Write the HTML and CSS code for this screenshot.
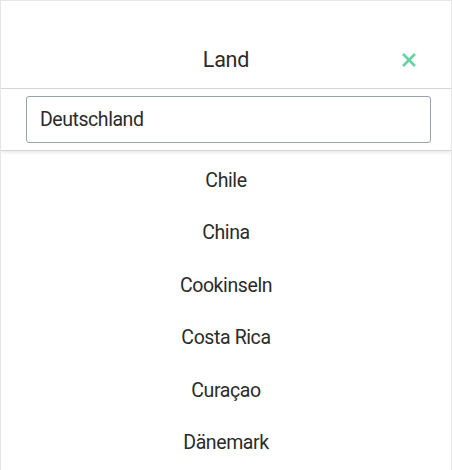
FILE: index.html
```html
<!DOCTYPE html>
<html lang="de">
  <head>
    <meta charset="UTF-8" />
    <meta name="viewport" content="width=device-width, initial-scale=1.0" />
    <title>Land auswählen</title>
    <link rel="stylesheet" href="styles.css">
  </head>
  <body>
    <div class="picker">
      <div class="picker-header">
        <h1>Land</h1>
        <button class="close" type="button" aria-label="Schließen">
          <svg width="16" height="16" viewBox="0 0 16 16">
            <path d="M2 2 L14 14 M14 2 L2 14" stroke="currentColor" stroke-width="2.6" fill="none" />
          </svg>
        </button>
      </div>
      <div class="picker-search">
        <input type="text" value="Deutschland" />
      </div>
      <ul class="picker-list">
        <li>Chile</li>
        <li>China</li>
        <li>Cookinseln</li>
        <li>Costa Rica</li>
        <li>Curaçao</li>
        <li>Dänemark</li>
      </ul>
    </div>
  </body>
</html>
```

FILE: styles.css
```css
body {
  margin: 0;
  padding: 0;
  font-family: Roboto, "Noto Sans", sans-serif;
  color: #2b2b2b;
  background: #fff;
}

.picker {
  width: 452px;
  height: 470px;
  box-sizing: border-box;
  border: 1px solid #e6e6e6;
  border-bottom: none;
  overflow: hidden;
}

.picker-header {
  height: 87px;
  display: flex;
  align-items: center;
  justify-content: center;
  position: relative;
  border-bottom: 1px solid #d4d4d4;
}

.picker-header h1 {
  margin: 0;
  padding-top: 29px;
  font-size: 21.5px;
  font-weight: 400;
  letter-spacing: -0.2px;
  color: #2b2b2b;
}

.close {
  position: absolute;
  right: 34px;
  top: 51px;
  padding: 0;
  border: none;
  background: none;
  color: #62d3a2;
  line-height: 0;
  cursor: pointer;
}

.picker-search {
  padding: 7px 20px 7px 25px;
  border-bottom: 1px solid #d4d4d4;
  box-shadow: 0 2px 3px rgba(0, 0, 0, 0.08);
}

.picker-search input {
  display: block;
  width: 100%;
  box-sizing: border-box;
  height: 47px;
  padding: 0 13px;
  border: 1px solid #9aa1ad;
  border-radius: 3px;
  font-family: Roboto, "Noto Sans", sans-serif;
  font-size: 19.5px;
  letter-spacing: -0.45px;
  color: #2b2b2b;
  outline: none;
}

.picker-list {
  list-style: none;
  margin: 0;
  padding: 4px 0 0;
}

.picker-list li {
  height: 52.4px;
  line-height: 52.4px;
  text-align: center;
  font-size: 19.5px;
  letter-spacing: -0.4px;
  color: #2b2b2b;
}
```
